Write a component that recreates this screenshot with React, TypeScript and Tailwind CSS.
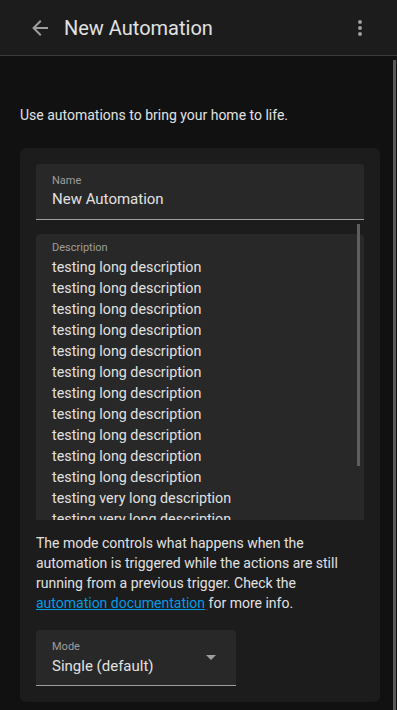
import React from "react";

const lines = [
  ...Array(11).fill("testing long description"),
  "testing very long description",
  "testing very long description",
];

export default function App() {
  return (
    <div
      className="w-[397px] h-[710px] bg-[#111111] overflow-hidden flex flex-col text-[#e1e1e1]"
      style={{ fontFamily: "Roboto, 'Noto Sans', sans-serif" }}
    >
      <header className="h-[56px] shrink-0 bg-[#1c1c1c] border-b border-[#3b3b3b] flex items-center">
        <div className="w-[64px] flex items-center pl-[28px]">
          <svg width="24" height="24" viewBox="0 0 24 24" className="text-[#9e9e9e]">
            <path fill="currentColor" d="M20,11V13H8L13.5,18.5L12.08,19.92L4.16,12L12.08,4.08L13.5,5.5L8,11H20Z" />
          </svg>
        </div>
        <div className="flex-1 text-[20px] leading-none text-[#e1e1e1]">New Automation</div>
        <div className="mr-[25px] flex items-center justify-center">
          <svg width="24" height="24" viewBox="0 0 24 24" className="text-[#9e9e9e]">
            <path
              fill="currentColor"
              d="M12,16A2,2 0 0,1 14,18A2,2 0 0,1 12,20A2,2 0 0,1 10,18A2,2 0 0,1 12,16M12,10A2,2 0 0,1 14,12A2,2 0 0,1 12,14A2,2 0 0,1 10,12A2,2 0 0,1 12,10M12,4A2,2 0 0,1 14,6A2,2 0 0,1 12,8A2,2 0 0,1 10,6A2,2 0 0,1 12,4Z"
            />
          </svg>
        </div>
      </header>
      <main className="relative flex-1 overflow-hidden">
        <div className="absolute right-[1px] top-[4px] bottom-0 w-[3px] bg-[#5a5a5a]" />
        <p className="pt-[49px] pl-[20px] text-[14px] leading-5 text-[#e1e1e1]">
          Use automations to bring your home to life.
        </p>
        <div className="mt-[23px] ml-[20px] w-[360px] bg-[#1c1c1c] rounded-[6px] px-[16px] pt-[16px] pb-[16px]">
          <div className="h-[56px] bg-[#282828] rounded-t-[4px] border-b border-[#9e9e9e] px-[16px] pt-[10px]">
            <div className="text-[11px] leading-[14px] text-[#9e9e9e]">Name</div>
            <div className="text-[15px] leading-[20px] mt-[1px] text-[#e1e1e1]">New Automation</div>
          </div>
          <div className="relative mt-[14px] h-[286px] bg-[#282828] rounded-t-[4px]">
            <div className="absolute right-[4px] top-[-10px] w-[3px] h-[242px] bg-[#5e5e5e]" />
            <div className="h-full overflow-hidden px-[16px] pt-[7px]">
              <div className="text-[11px] leading-[14px] text-[#9e9e9e]">Description</div>
              <div className="mt-[2px]">
                {lines.map((l, i) => (
                  <div key={i} className="text-[14.3px] leading-[21px] text-[#e1e1e1]">
                    {l}
                  </div>
                ))}
              </div>
            </div>
          </div>
          <p className="mt-[13px] text-[14px] leading-5 text-[#e1e1e1]">
            The mode controls what happens when the automation is triggered while the actions are still running
            from a previous trigger. Check the{" "}
            <a className="text-[#039be5] underline" href="#">
              automation documentation
            </a>{" "}
            for more info.
          </p>
          <div className="relative mt-[17px] w-[200px] h-[56px] bg-[#282828] rounded-t-[4px] border-b border-[#9e9e9e] px-[16px] pt-[10px]">
            <div className="text-[11px] leading-[14px] text-[#9e9e9e]">Mode</div>
            <div className="text-[15px] leading-[20px] mt-[2px] text-[#e1e1e1]">Single (default)</div>
            <svg
              className="absolute right-[20px] top-[25px]"
              width="10"
              height="5"
              viewBox="0 0 10 5"
            >
              <path d="M0 0L5 5L10 0Z" fill="#9e9e9e" />
            </svg>
          </div>
        </div>
      </main>
    </div>
  );
}
